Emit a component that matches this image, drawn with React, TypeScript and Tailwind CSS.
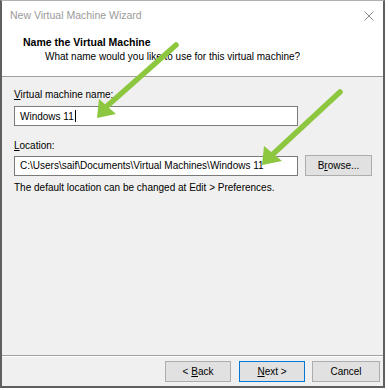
import React from "react";

const font = { fontFamily: '"Liberation Sans", Arial, sans-serif' };

function Btn({ children, primary = false, w }: { children: React.ReactNode; primary?: boolean; w: string }) {
  return (
    <div
      className={`${w} h-[21px] flex items-center justify-center text-[10px] text-black bg-[#e1e1e1] ${
        primary ? "border border-[#0078d7]" : "border border-[#adadad]"
      }`}
    >
      {children}
    </div>
  );
}

export default function App() {
  return (
    <div className="w-[388px] h-[390px] bg-white relative" style={font}>
      <div className="w-[385px] h-[388px] border-x-2 border-b-2 border-t border-x-[#5f5f5f] border-b-[#5f5f5f] border-t-[#b0b0b0] flex flex-col">
        {/* title bar */}
        <div className="h-[30px] shrink-0 bg-white flex items-center justify-between pl-[8px] pr-[8px]">
          <span className="text-[10.5px] text-[#9a9a9a]">New Virtual Machine Wizard</span>
          <svg width="10" height="10" viewBox="0 0 10 10" className="mr-[1px]">
            <path d="M0.5 0.5 L9.5 9.5 M9.5 0.5 L0.5 9.5" stroke="#8a8a8a" strokeWidth="1" />
          </svg>
        </div>
        {/* header */}
        <div className="h-[46px] shrink-0 bg-white border-b border-[#a0a0a0] flex flex-col pl-[21px] pt-[4px]">
          <div className="text-[10.5px] font-bold text-black leading-[14px]">Name the Virtual Machine</div>
          <div className="text-[10px] text-black leading-[14px] pl-[22px] mt-[1px]">
            What name would you like to use for this virtual machine?
          </div>
        </div>
        {/* body */}
        <div className="flex-1 bg-[#f0f0f0] flex flex-col pl-[12px] pr-[11px] pt-[11px] text-[10px] text-black">
          <div className="leading-[14px]">
            <span className="underline">V</span>irtual machine name:
          </div>
          <div className="mt-[4px] w-[284px] h-[20px] bg-white border border-[#7a7a7a] flex items-center pl-[5px]">
            <span>Windows 11</span>
            <span className="w-[1px] h-[12px] bg-black ml-[1px]" />
          </div>
          <div className="leading-[14px] mt-[13px]">
            <span className="underline">L</span>ocation:
          </div>
          <div className="mt-[2px] flex items-center gap-[7px]">
            <div className="w-[284px] h-[20px] bg-white border border-[#7a7a7a] flex items-center pl-[5px] whitespace-nowrap overflow-hidden">
              C:\Users\saif\Documents\Virtual Machines\Windows 11
            </div>
            <Btn w="w-[67px]">
              B<span className="underline">r</span>owse...
            </Btn>
          </div>
          <div className="leading-[14px] mt-[5px]">The default location can be changed at Edit &gt; Preferences.</div>
        </div>
        {/* separator */}
        <div className="h-[2px] shrink-0 flex flex-col">
          <div className="h-[1px] bg-[#a0a0a0]" />
          <div className="h-[1px] bg-white" />
        </div>
        {/* footer */}
        <div className="h-[29px] shrink-0 bg-[#f0f0f0] flex items-start justify-end pr-[3px] pt-[4px]">
          <Btn w="w-[66px]">
            &lt; <span className="underline ml-[3px]">B</span>ack
          </Btn>
          <div className="w-[8px]" />
          <Btn w="w-[66px]" primary>
            <span className="underline">N</span>ext &gt;
          </Btn>
          <div className="w-[7px]" />
          <Btn w="w-[68px]">Cancel</Btn>
        </div>
      </div>
      {/* arrows */}
      <svg className="absolute left-0 top-0 pointer-events-none" width="388" height="390" viewBox="0 0 388 390">
        <line x1="176" y1="45" x2="106" y2="107" stroke="#8dc63f" strokeWidth="5.5" strokeLinecap="round" />
        <polygon points="97,118 99,99 116,114" fill="#8dc63f" />
        <line x1="340" y1="92" x2="272" y2="155" stroke="#8dc63f" strokeWidth="5.5" strokeLinecap="round" />
        <polygon points="262,165 264,146 282,161" fill="#8dc63f" />
      </svg>
    </div>
  );
}
